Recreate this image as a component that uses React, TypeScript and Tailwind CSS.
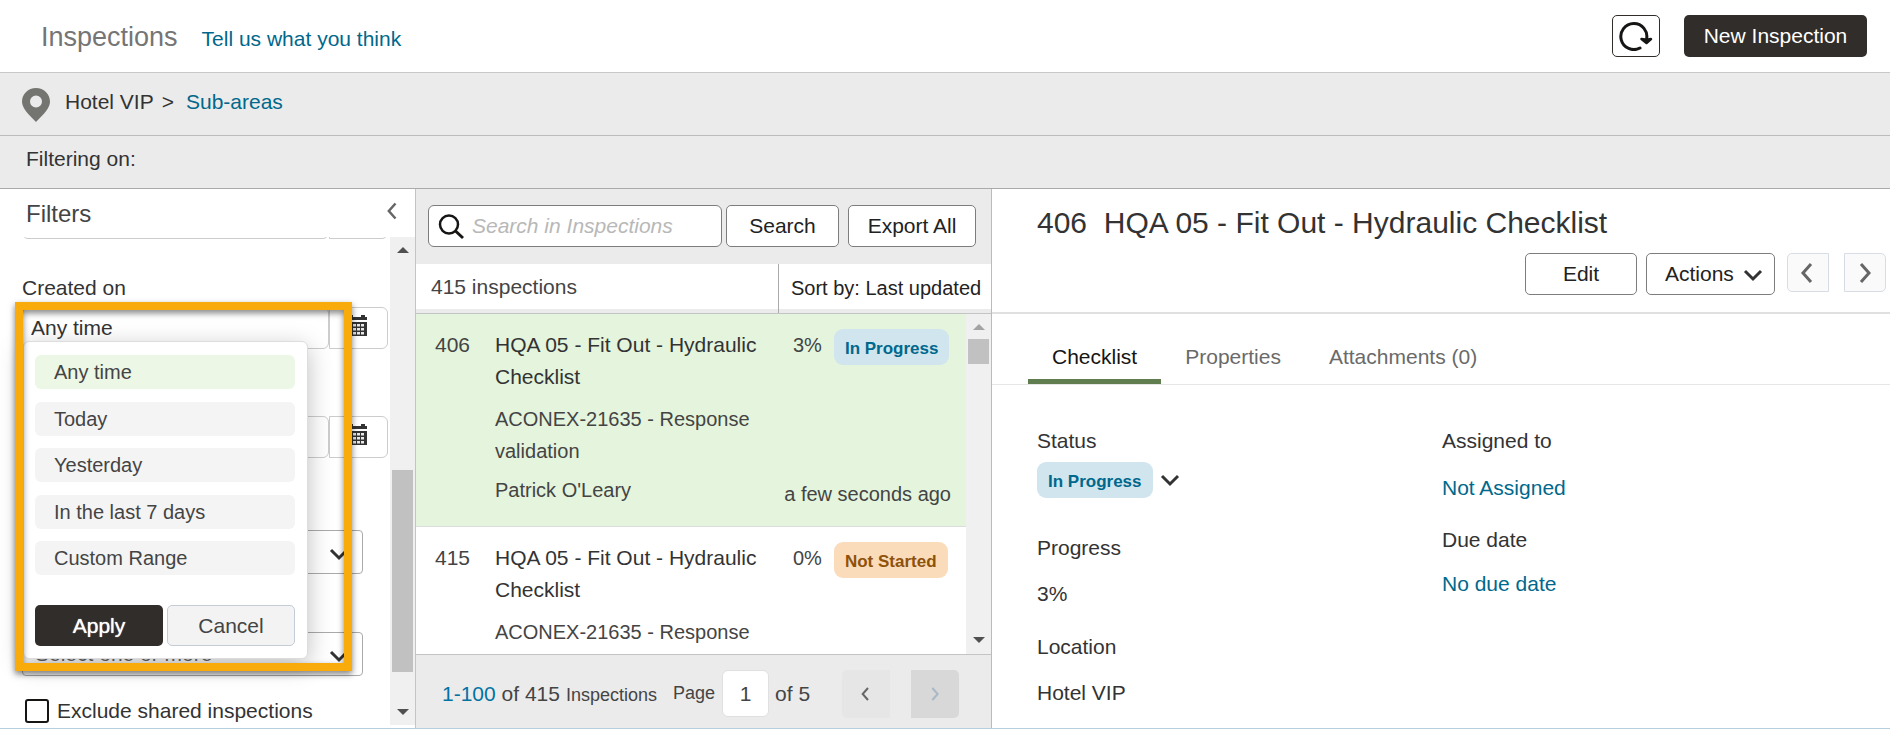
import { useState, type ReactNode } from "react";

type Status = "In Progress" | "Not Started";

interface Inspection {
  id: number;
  title: string;
  subtitle: string;
  owner?: string;
  updated?: string;
  progress: string;
  status: Status;
}

const inspections: Inspection[] = [
  {
    id: 406,
    title: "HQA 05 - Fit Out - Hydraulic Checklist",
    subtitle: "ACONEX-21635 - Response validation",
    owner: "Patrick O'Leary",
    updated: "a few seconds ago",
    progress: "3%",
    status: "In Progress",
  },
  {
    id: 415,
    title: "HQA 05 - Fit Out - Hydraulic Checklist",
    subtitle: "ACONEX-21635 - Response",
    progress: "0%",
    status: "Not Started",
  },
];

const ranges = ["Any time", "Today", "Yesterday", "In the last 7 days", "Custom Range"];
const tabs = ["Checklist", "Properties", "Attachments (0)"];

const outlineButton = "h-[42px] rounded-[5px] border border-[#7d7d7d] bg-white text-[#222]";

function Chevron({ dir, className }: { dir: "left" | "right" | "down"; className?: string }) {
  const d = { left: "M15 3L7 12L15 21", right: "M8 3L16 12L8 21", down: "M4 8L12 16L20 8" }[dir];
  return (
    <svg viewBox="0 0 24 24" fill="none" stroke="currentColor" strokeWidth="3" className={className} aria-hidden="true">
      <path d={d} />
    </svg>
  );
}

function Arrow({ up, className }: { up?: boolean; className: string }) {
  return (
    <svg width="12" height="6" viewBox="0 0 12 6" fill="currentColor" className={className} aria-hidden="true">
      <path d={up ? "M0 6L6 0L12 6Z" : "M0 0L6 6L12 0Z"} />
    </svg>
  );
}

function CalendarIcon() {
  return (
    <svg width="20" height="21" viewBox="0 0 20 21" aria-hidden="true">
      <path d="M0 2H3V0H6V2H14V0H18V2H20V5H0Z" fill="#333" />
      <path d="M0 7H20V21H0Z" fill="#333" />
      {[9, 13, 17].map((y) => (
        <path key={y} d={`M2 ${y}h3v2.500h-3zM6 ${y}h3v2.500h-3zM10 ${y}h3v2.500h-3zM14 ${y}h3v2.500h-3z`} fill="#e8e8e8" />
      ))}
    </svg>
  );
}

function Badge({ status }: { status: Status }) {
  return (
    <span
      className={`flex h-9 items-center rounded-[9px] px-[11px] pt-[3px] text-[17px] font-bold whitespace-nowrap ${
        status === "In Progress" ? "bg-[#d1e5ee] text-[#00688c]" : "bg-[#fadcbb] text-[#8f520a]"
      }`}
    >
      {status}
    </span>
  );
}

function DateField({ label, value }: { label: string; value: string }) {
  return (
    <div className="flex">
      <input
        aria-label={label}
        defaultValue={value}
        className="h-[42px] w-[307px] rounded-[6px] border border-[#ccc] bg-white px-2 text-[#333]"
      />
      <button
        aria-label={`${label} calendar`}
        className="flex h-[42px] w-[59px] justify-center rounded-r-[6px] border border-[#ccc] bg-white pt-[7px] pr-1"
      >
        <CalendarIcon />
      </button>
    </div>
  );
}

function SelectField({ label }: { label: string }) {
  return (
    <div className="relative w-[341px]">
      <select aria-label={label} className="h-11 w-full appearance-none rounded-[4px] border border-[#aaa] bg-white px-3 text-[#666]">
        <option>Select one or more</option>
      </select>
      <Chevron dir="down" className="pointer-events-none absolute top-3 right-3 size-6 text-[#333]" />
    </div>
  );
}

function DateRangeMenu() {
  const [selected, setSelected] = useState(ranges[0]);

  return (
    <div className="absolute top-[104px] left-[23px] h-[318px] w-[285px] rounded-[6px] border border-[#ddd] bg-white py-[13px] pr-3 pl-[11px] shadow-[0_6px_24px_rgba(0,0,0,0.25)]">
      <div className="flex h-[220px] flex-col justify-between">
        {ranges.map((range) => (
          <button
            key={range}
            onClick={() => setSelected(range)}
            className={`h-[34px] rounded-[6px] px-[19px] text-left text-[20px] text-[#444] ${
              range === selected ? "bg-[#ecf7e5]" : "bg-[#f4f4f4]"
            }`}
          >
            {range}
          </button>
        ))}
      </div>
      <div className="mt-[30px] grid grid-cols-2 gap-1">
        <button className="h-[41px] rounded-[5px] bg-[#312d2a] text-white [text-shadow:0_0_1px_#fff]">Apply</button>
        <button className="h-[41px] rounded-[5px] border border-[#c4ccd6] bg-[#f3f3f3] text-[#444]">Cancel</button>
      </div>
    </div>
  );
}

function Filters() {
  return (
    <aside className="flex w-[416px] shrink-0 flex-col border-r border-[#c4c4c4] bg-white">
      <div className="flex h-12 shrink-0 items-center justify-between pr-3 pl-[26px]">
        <h2 className="pt-[2px] text-[24px] text-[#444]">Filters</h2>
        <button aria-label="Collapse filters" className="pb-1">
          <Chevron dir="left" className="size-5 text-[#666]" />
        </button>
      </div>
      <div className="relative flex min-h-0 flex-1">
        <div className="flex-1 overflow-hidden pl-[22px]">
          <div className="-mt-10">
            <DateField label="Last updated" value="" />
          </div>
          <h3 className="pt-[35px] pb-[5px] leading-7 text-[#333]">Created on</h3>
          <DateField label="Created on" value="Any time" />
          <div className="mt-[67px]">
            <DateField label="Due date" value="" />
          </div>
          <div className="mt-[72px]">
            <SelectField label="Status" />
          </div>
          <div className="mt-[58px]">
            <SelectField label="Assigned to" />
          </div>
          <label className="mt-[21px] flex items-center gap-2 pl-[3px] leading-7 text-[#333]">
            <input type="checkbox" className="size-6 appearance-none rounded-[3px] border-2 border-[#161513] bg-white" />
            Exclude shared inspections
          </label>
        </div>
        <div className="mb-[3px] flex w-[25px] flex-col items-center bg-[#f0f0f0]">
          <Arrow up className="mt-[10px] text-[#505050]" />
          <div className="mt-[217px] h-[202px] w-[21px] bg-[#c1c1c1]" />
          <Arrow className="mt-auto mb-[10px] text-[#505050]" />
        </div>
        <DateRangeMenu />
        <div className="pointer-events-none absolute top-[65px] left-[15px] h-[369px] w-[337px] border-8 border-[#f8ab0b] drop-shadow-[0_3px_3px_rgba(0,0,0,0.5)]" />
      </div>
    </aside>
  );
}

function InspectionRow({ item, active }: { item: Inspection; active: boolean }) {
  return (
    <li className={`flex h-[213px] shrink-0 border-b border-[#ddd] pt-[15px] pl-[19px] ${active ? "bg-[#e4f4dd]" : "bg-white"}`}>
      <span className="w-[60px] shrink-0 leading-8 text-[#444]">{item.id}</span>
      <div className="w-[284px] shrink-0 pr-3 leading-8">
        <p className="text-[#333]">{item.title}</p>
        <p className="mt-[10px] text-[20px] text-[#444]">{item.subtitle}</p>
        {item.owner && <p className="mt-[7px] text-[20px] text-[#444]">{item.owner}</p>}
      </div>
      <div className="flex flex-1 flex-col justify-between pr-[15px] pb-4 text-[20px] leading-8 text-[#444]">
        <div className="flex gap-3 pl-[14px]">
          <span>{item.progress}</span>
          <Badge status={item.status} />
        </div>
        {item.updated && <span className="self-end whitespace-nowrap">{item.updated}</span>}
      </div>
    </li>
  );
}

function InspectionList() {
  return (
    <section className="flex w-[576px] shrink-0 flex-col border-r border-[#bbb] bg-[#ebebeb]">
      <div className="flex h-[75px] shrink-0 items-center pb-[1px] pl-3">
        <div className="relative">
          <input
            aria-label="Search in Inspections"
            placeholder="Search in Inspections"
            className="h-[42px] w-[294px] rounded-[6px] border border-[#7d7d7d] bg-white pl-[43px] placeholder:text-[#b8b8b8] placeholder:italic"
          />
          <svg viewBox="0 0 26 26" className="pointer-events-none absolute top-[9px] left-[10px] size-[26px]" fill="none" stroke="#161513" strokeWidth="2.5" aria-hidden="true">
            <circle cx="11" cy="10.5" r="9" />
            <path d="M17.5 17L25 24" strokeWidth="3" />
          </svg>
        </div>
        <button className={`${outlineButton} ml-1 w-[113px]`}>Search</button>
        <button className={`${outlineButton} ml-[9px] w-32 whitespace-nowrap`}>Export All</button>
      </div>
      <div className="flex h-[50px] shrink-0 border-b border-[#c4c4c4]">
        <div className="h-[45px] flex-1 bg-white pl-[15px] leading-[45px] text-[#444]">415 inspections</div>
        <div className="w-[213px] border-l border-[#aaa]">
          <button className="h-[45px] w-full bg-white pt-[2px] pl-3 text-left text-[20px] whitespace-nowrap text-[#222]">
            Sort by: Last updated
          </button>
        </div>
      </div>
      <div className="flex min-h-0 flex-1">
        <ul className="flex flex-1 flex-col overflow-hidden bg-white">
          {inspections.map((item) => (
            <InspectionRow key={item.id} item={item} active={item.id === 406} />
          ))}
        </ul>
        <div className="flex w-[25px] flex-col items-center bg-[#f0f0f0]">
          <Arrow up className="mt-[10px] text-[#a3a3a3]" />
          <div className="mt-[9px] h-[25px] w-[21px] bg-[#c1c1c1]" />
          <Arrow className="mt-auto mb-[11px] text-[#505050]" />
        </div>
      </div>
      <footer className="flex h-[74px] shrink-0 items-center border-t border-[#c4c4c4] pt-[5px] pb-[1px] pl-[26px] whitespace-nowrap text-[#444]">
        <p className="flex items-baseline gap-[6px]">
          <span>
            <a href="#" className="text-[#0073a3]">1-100</a> of 415
          </span>
          <span className="text-[18px]">Inspections</span>
        </p>
        <label className="ml-4 flex items-center gap-[7px]">
          <span className="text-[18px]">Page</span>
          <input defaultValue="1" className="h-[47px] w-[47px] rounded-[6px] border border-[#e0e0e0] bg-white text-center" />
        </label>
        <span className="ml-[6px]">of 5</span>
        <button aria-label="Previous page" className="ml-8 flex size-12 items-center justify-center rounded-l-[5px] bg-[#e6e6e6]">
          <Chevron dir="left" className="size-4 text-[#666]" />
        </button>
        <button aria-label="Next page" className="ml-[21px] flex size-12 items-center justify-center rounded-r-[5px] bg-[#d8d8d8]">
          <Chevron dir="right" className="size-4 text-[#a9b8c6]" />
        </button>
      </footer>
    </section>
  );
}

function Field({ label, children, className = "" }: { label: string; children: ReactNode; className?: string }) {
  return (
    <div className={className}>
      <dt className="leading-7">{label}</dt>
      <dd className="leading-7">{children}</dd>
    </div>
  );
}

function Details() {
  const [tab, setTab] = useState(tabs[0]);

  return (
    <main className="min-w-0 flex-1 bg-white">
      <header className="h-[125px] border-b-2 border-[#e0e0e0] pt-4 pr-1">
        <h2 className="pl-[45px] text-[30px] leading-9 whitespace-pre text-[#333]">{"406  HQA 05 - Fit Out - Hydraulic Checklist"}</h2>
        <div className="mt-3 flex justify-end">
          <button className={`${outlineButton} w-28`}>Edit</button>
          <button className={`${outlineButton} ml-[9px] flex w-[129px] items-center justify-between pr-[9px] pl-[18px]`}>
            Actions
            <Chevron dir="down" className="mt-[2px] size-6 text-[#333]" />
          </button>
          <button aria-label="Previous inspection" className="ml-3 flex h-[39px] w-[42px] items-center justify-center rounded-l-[5px] border border-[#d8dce4] bg-[#fafafa]">
            <Chevron dir="left" className="size-6 text-[#666]" />
          </button>
          <button aria-label="Next inspection" className="ml-[15px] flex h-[39px] w-[42px] items-center justify-center rounded-r-[5px] border border-[#d8dce4] bg-[#fafafa]">
            <Chevron dir="right" className="size-6 text-[#666]" />
          </button>
        </div>
      </header>
      <nav className="flex h-[71px] border-b border-[#e6e6e6] pl-9">
        {tabs.map((t) => (
          <button
            key={t}
            onClick={() => setTab(t)}
            className={`border-b-[5px] px-6 pt-5 ${
              t === tab ? "border-[#5f7d4f] text-[#161513]" : "border-transparent text-[#6a6a6a]"
            }`}
          >
            {t}
          </button>
        ))}
      </nav>
      <dl className="grid grid-cols-2 pt-[42px] pr-[43px] pl-[45px] text-[#333]">
        <div>
          <Field label="Status">
            <button className="mt-[7px] flex items-center gap-[5px]">
              <Badge status="In Progress" />
              <Chevron dir="down" className="size-6" />
            </button>
          </Field>
          <Field label="Progress" className="mt-9">
            <p className="mt-[18px]">3%</p>
          </Field>
          <Field label="Location" className="mt-[25px]">
            <p className="mt-[18px]">Hotel VIP</p>
          </Field>
        </div>
        <div>
          <Field label="Assigned to">
            <a href="#" className="mt-[19px] block text-[#00688c]">Not Assigned</a>
          </Field>
          <Field label="Due date" className="mt-6">
            <a href="#" className="mt-4 block text-[#00688c]">No due date</a>
          </Field>
        </div>
      </dl>
    </main>
  );
}

function App() {
  return (
    <div className="flex h-screen min-h-[729px] flex-col overflow-hidden border-b border-[#b5d0dc] bg-white font-['Liberation_Sans',Arial,sans-serif] text-[21px]">
      <header className="flex h-[73px] shrink-0 items-center border-b border-[#c8c8c8] pr-[23px] pl-[41px]">
        <h1 className="pt-[2px] text-[27px] text-[#757575]">Inspections</h1>
        <a href="#" className="ml-6 pt-[6px] text-[#00688c]">Tell us what you think</a>
        <button aria-label="Refresh" className="ml-auto flex h-[42px] w-12 items-center justify-center rounded-[5px] border border-[#312d2a]">
          <svg width="34" height="30" viewBox="0 0 34 30" fill="none" stroke="#161513" strokeWidth="3" strokeLinecap="round" strokeLinejoin="round" aria-hidden="true">
            <path d="M21 27A13 13 0 1 1 27.500 18.500" />
            <path d="M22.500 18L27.500 22L32 18L27.500 18.800Z" fill="#161513" strokeWidth="2.500" />
          </svg>
        </button>
        <button className="ml-6 h-[42px] w-[183px] rounded-[5px] bg-[#312d2a] text-white">New Inspection</button>
      </header>
      <nav className="flex h-[63px] shrink-0 items-center border-b border-[#bbb] bg-[#ebebeb] pl-[22px] text-[#333]">
        <svg width="28" height="34" viewBox="0 0 28 34" className="mt-[2px]" aria-hidden="true">
          <path fill="#747470" fillRule="evenodd" d="M14 0C6.200 0 0 6 0 13.500C0 20 6 26 14 34C22 26 28 20 28 13.500C28 6 21.800 0 14 0ZM14 7.500A6 6 0 1 1 14 19.500A6 6 0 1 1 14 7.500Z" />
        </svg>
        <span className="ml-[15px] pb-1">Hotel VIP</span>
        <span className="ml-2 pb-1">&gt;</span>
        <a href="#" className="ml-3 pb-1 text-[#00688c]">Sub-areas</a>
      </nav>
      <div className="flex h-[53px] shrink-0 items-center border-b border-[#aaa] bg-[#ebebeb] pb-[6px] pl-[26px] text-[#333]">Filtering on:</div>
      <div className="flex min-h-0 flex-1">
        <Filters />
        <InspectionList />
        <Details />
      </div>
    </div>
  );
}

export default App;
